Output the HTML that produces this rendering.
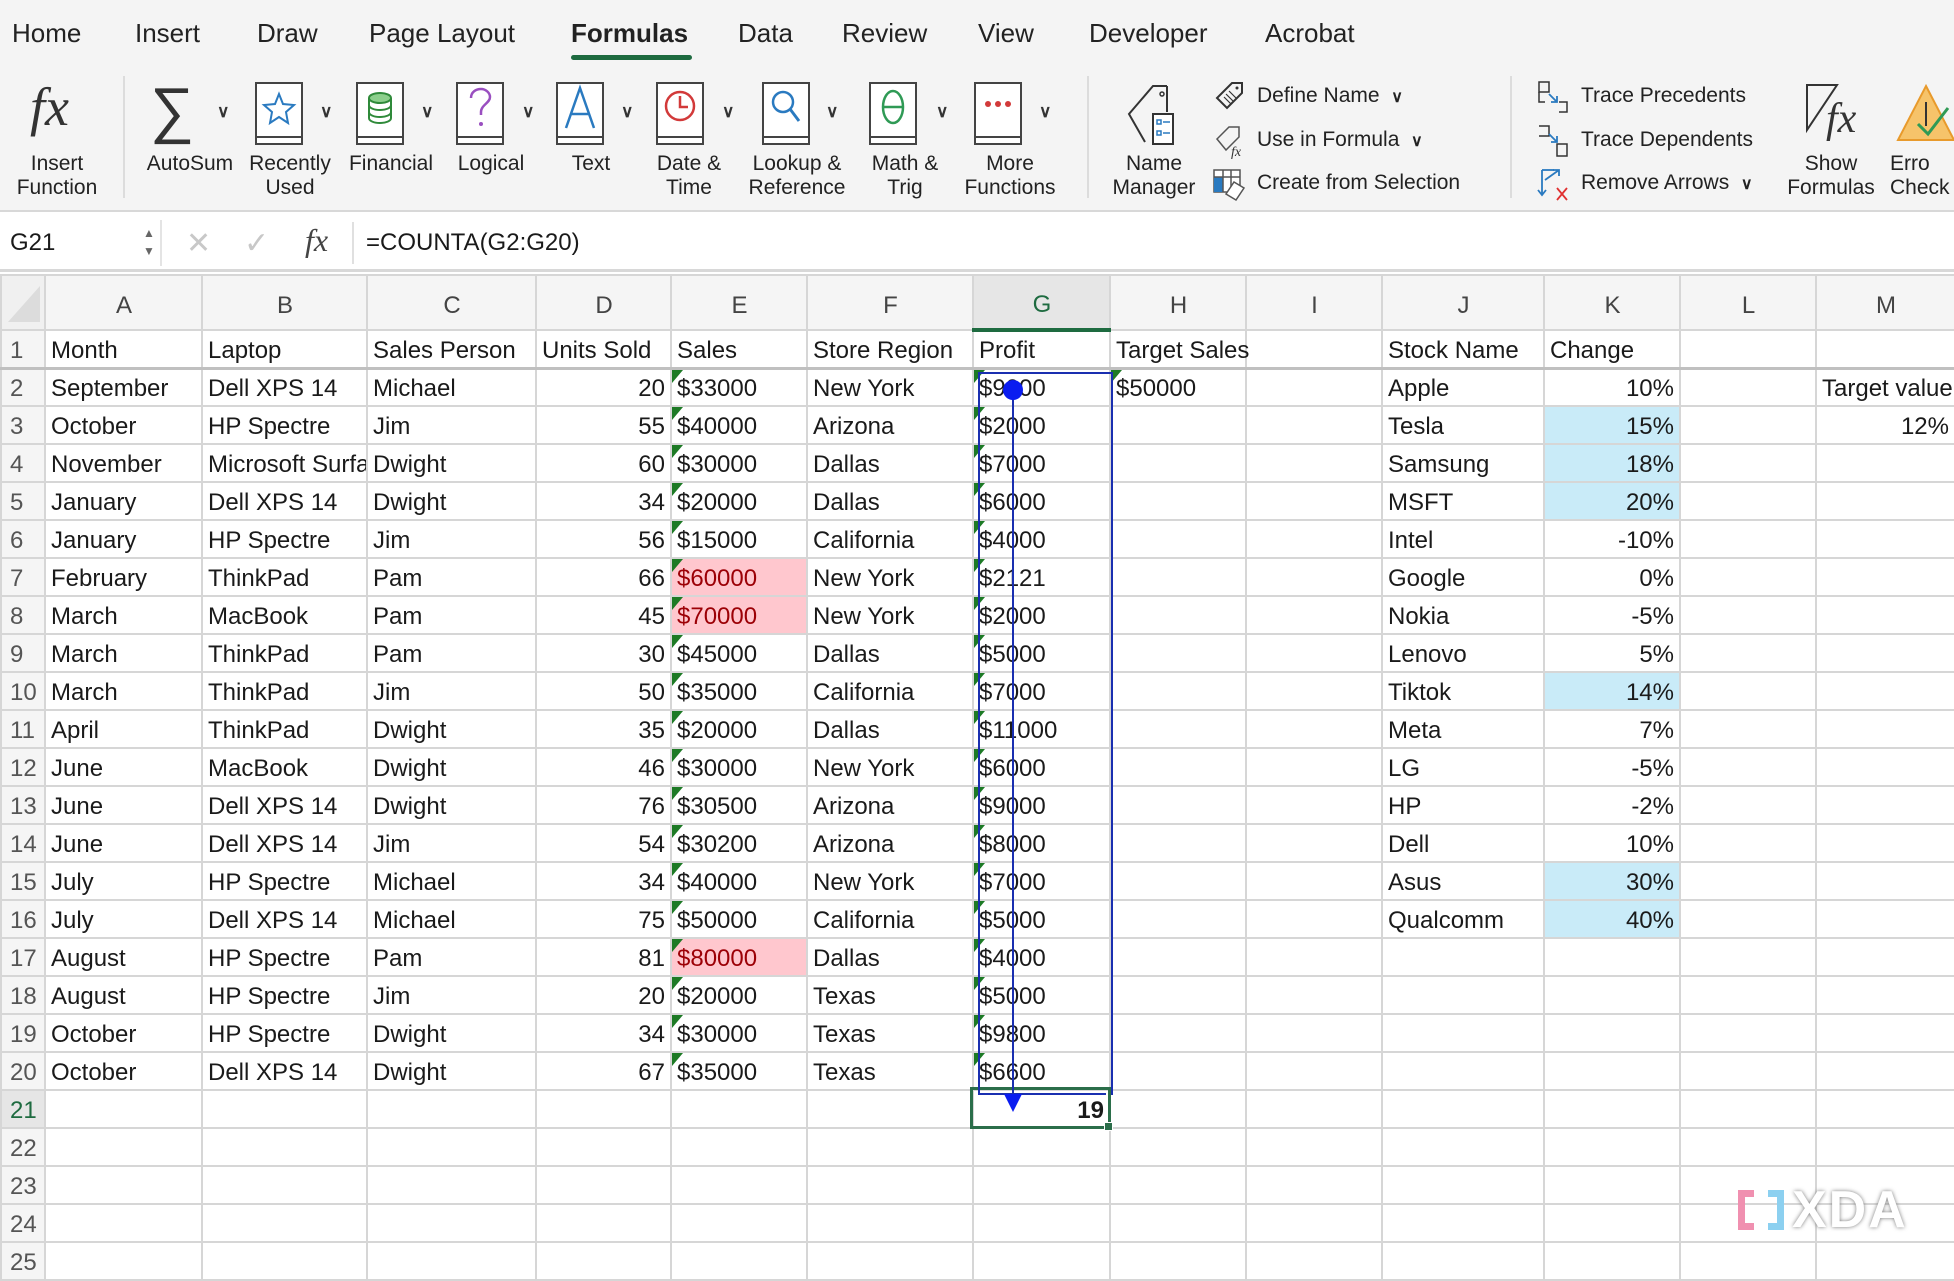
<!DOCTYPE html>
<html><head><meta charset="utf-8">
<style>
*{box-sizing:border-box;margin:0;padding:0}
body{width:1954px;height:1276px;overflow:hidden;background:#fff;font-family:"Liberation Sans",sans-serif;color:#1a1a1a;position:relative}
#ribbon{position:absolute;left:0;top:0;width:1954px;height:212px;background:#f4f4f4;border-bottom:2px solid #d8d8d8}
.tab{position:absolute;top:18px;font-size:26px;color:#222}
.lbl{position:absolute;font-size:21px;color:#222;text-align:center;line-height:24px;white-space:nowrap}
.sm{position:absolute;font-size:21px;color:#222;white-space:nowrap}
.sep{position:absolute;top:76px;width:2px;height:122px;background:#dcdcdc}
.chev{position:absolute;top:102px;font-size:17px;color:#333;font-weight:bold}
.cv{font-size:16px;font-weight:bold}
svg{position:absolute;overflow:visible}
#fbar{position:absolute;left:0;top:214px;width:1954px;height:58px;background:#fff;border-bottom:3px solid #d8d8d8}
table{position:absolute;left:0;top:274px;border-collapse:collapse;table-layout:fixed;width:1954px}
td{border:2px solid #d6d6d6;height:38px;font-size:24px;padding:4px 4px 0 5px;white-space:nowrap;overflow:hidden;position:relative;line-height:30px}
tr.h td{height:55px;background:#f5f5f5;text-align:center;color:#444;font-size:24px;padding-top:6px}
td.rn{background:#f5f5f5;color:#555;padding-left:8px}
.r{text-align:right;padding-right:5px}
.t::before{content:"";position:absolute;left:0;top:0;border-top:13px solid #1d7a25;border-right:11px solid transparent}
.p{background:#ffc7ce;color:#9c0006}
.b{background:#c9ebf8}
tr.one td{border-bottom:3px solid #c0c0c0}
</style></head><body>
<div id="ribbon">
<div class="tab" style="left:12px">Home</div>
<div class="tab" style="left:135px">Insert</div>
<div class="tab" style="left:257px">Draw</div>
<div class="tab" style="left:369px">Page Layout</div>
<div class="tab" style="left:571px;font-weight:bold">Formulas</div>
<div style="position:absolute;left:571px;top:55px;width:121px;height:5px;border-radius:3px;background:#1e6b40"></div>
<div class="tab" style="left:738px">Data</div>
<div class="tab" style="left:842px">Review</div>
<div class="tab" style="left:978px">View</div>
<div class="tab" style="left:1089px">Developer</div>
<div class="tab" style="left:1265px">Acrobat</div>

<div style="position:absolute;left:30px;top:76px;font-family:'Liberation Serif',serif;font-style:italic;font-size:54px;color:#333">fx</div>
<div class="lbl" style="left:7px;top:152px;width:100px">Insert<br>Function</div>
<div class="sep" style="left:123px"></div>

<div style="position:absolute;left:150px;top:76px;font-size:62px;color:#333;line-height:70px">∑</div>
<div class="lbl" style="left:140px;top:152px;width:100px">AutoSum</div>
<div class="chev" style="left:217px">∨</div>

<svg style="left:255px;top:82px" width="50" height="64"><rect x="1" y="1" width="46" height="54" fill="#fff" stroke="#444" stroke-width="2"/><rect x="1" y="55" width="46" height="7" fill="#fff" stroke="#444" stroke-width="2"/><polygon points="24,12 28,22 39,23 31,30 33,41 24,35 15,41 17,30 9,23 20,22" fill="none" stroke="#2a7ac0" stroke-width="2"/></svg>
<div class="lbl" style="left:240px;top:152px;width:100px">Recently<br>Used</div>
<div class="chev" style="left:320px">∨</div>

<svg style="left:356px;top:82px" width="50" height="64"><rect x="1" y="1" width="46" height="54" fill="#fff" stroke="#444" stroke-width="2"/><rect x="1" y="55" width="46" height="7" fill="#fff" stroke="#444" stroke-width="2"/><ellipse cx="24" cy="16" rx="11" ry="5" fill="#8ccf8c" stroke="#2f8a3a" stroke-width="2"/><path d="M13 16v20c0 3 5 5 11 5s11-2 11-5V16M13 23c0 3 5 5 11 5s11-2 11-5M13 30c0 3 5 5 11 5s11-2 11-5" fill="none" stroke="#2f8a3a" stroke-width="2"/></svg>
<div class="lbl" style="left:341px;top:152px;width:100px">Financial</div>
<div class="chev" style="left:421px">∨</div>

<svg style="left:456px;top:82px" width="50" height="64"><rect x="1" y="1" width="46" height="54" fill="#fff" stroke="#444" stroke-width="2"/><rect x="1" y="55" width="46" height="7" fill="#fff" stroke="#444" stroke-width="2"/><path d="M15 16c0-6 5-9 10-9s9 4 9 8c0 6-9 8-9 15v3" fill="none" stroke="#9a4fc0" stroke-width="2.5"/><circle cx="25" cy="42" r="2" fill="#9a4fc0"/></svg>
<div class="lbl" style="left:441px;top:152px;width:100px">Logical</div>
<div class="chev" style="left:522px">∨</div>

<svg style="left:556px;top:82px" width="50" height="64"><rect x="1" y="1" width="46" height="54" fill="#fff" stroke="#444" stroke-width="2"/><rect x="1" y="55" width="46" height="7" fill="#fff" stroke="#444" stroke-width="2"/><path d="M10 46L24 6L38 46M15 32h18" fill="none" stroke="#2a7ac0" stroke-width="2.5"/></svg>
<div class="lbl" style="left:541px;top:152px;width:100px">Text</div>
<div class="chev" style="left:621px">∨</div>

<svg style="left:656px;top:82px" width="50" height="64"><rect x="1" y="1" width="46" height="54" fill="#fff" stroke="#444" stroke-width="2"/><rect x="1" y="55" width="46" height="7" fill="#fff" stroke="#444" stroke-width="2"/><circle cx="24" cy="24" r="14" fill="none" stroke="#d23a3a" stroke-width="2.5"/><path d="M24 14v11h8" fill="none" stroke="#d23a3a" stroke-width="2.5"/></svg>
<div class="lbl" style="left:639px;top:152px;width:100px">Date &amp;<br>Time</div>
<div class="chev" style="left:722px">∨</div>

<svg style="left:762px;top:82px" width="50" height="64"><rect x="1" y="1" width="46" height="54" fill="#fff" stroke="#444" stroke-width="2"/><rect x="1" y="55" width="46" height="7" fill="#fff" stroke="#444" stroke-width="2"/><circle cx="21" cy="20" r="10" fill="none" stroke="#2a7ac0" stroke-width="2.5"/><path d="M28 27l9 12" stroke="#2a7ac0" stroke-width="3"/></svg>
<div class="lbl" style="left:742px;top:152px;width:110px">Lookup &amp;<br>Reference</div>
<div class="chev" style="left:826px">∨</div>

<svg style="left:869px;top:82px" width="50" height="64"><rect x="1" y="1" width="46" height="54" fill="#fff" stroke="#444" stroke-width="2"/><rect x="1" y="55" width="46" height="7" fill="#fff" stroke="#444" stroke-width="2"/><ellipse cx="24" cy="25" rx="10" ry="16" fill="none" stroke="#2f9a55" stroke-width="2.5"/><path d="M14 25h20" stroke="#2f9a55" stroke-width="2.5"/></svg>
<div class="lbl" style="left:855px;top:152px;width:100px">Math &amp;<br>Trig</div>
<div class="chev" style="left:936px">∨</div>

<svg style="left:974px;top:82px" width="50" height="64"><rect x="1" y="1" width="46" height="54" fill="#fff" stroke="#444" stroke-width="2"/><rect x="1" y="55" width="46" height="7" fill="#fff" stroke="#444" stroke-width="2"/><circle cx="14" cy="22" r="3" fill="#d23a3a"/><circle cx="24" cy="22" r="3" fill="#d23a3a"/><circle cx="34" cy="22" r="3" fill="#d23a3a"/></svg>
<div class="lbl" style="left:955px;top:152px;width:110px">More<br>Functions</div>
<div class="chev" style="left:1039px">∨</div>
<div class="sep" style="left:1087px"></div>

<svg style="left:1127px;top:84px" width="60" height="62"><path d="M40 2h-14L2 30l16 28" fill="none" stroke="#333" stroke-width="2"/><path d="M40 2v26" stroke="#333" stroke-width="2"/><circle cx="35" cy="10" r="2" fill="none" stroke="#333" stroke-width="1.5"/><rect x="26" y="30" width="20" height="30" fill="#fff" stroke="#333" stroke-width="2"/><rect x="30" y="36" width="4" height="4" fill="none" stroke="#2a7ac0" stroke-width="1.5"/><rect x="30" y="47" width="4" height="4" fill="none" stroke="#2a7ac0" stroke-width="1.5"/><path d="M36 38h7M36 49h7" stroke="#2a7ac0" stroke-width="1.5"/></svg>
<div class="lbl" style="left:1104px;top:152px;width:100px">Name<br>Manager</div>

<svg style="left:1214px;top:80px" width="32" height="32"><path d="M28 3H18L3 18l10 10 15-15z" fill="none" stroke="#333" stroke-width="2"/><path d="M12 14l8 8M10 17l7 7M15 11l7 7" stroke="#333" stroke-width="1.2"/><circle cx="23" cy="8" r="1.5" fill="#333"/></svg>
<div class="sm" style="left:1257px;top:84px">Define Name&nbsp;&nbsp;<span class="cv">∨</span></div>
<svg style="left:1214px;top:124px" width="32" height="36"><path d="M25 3v10L12 26 3 15 15 3z" fill="none" stroke="#555" stroke-width="1.5"/><text x="17" y="32" font-family="Liberation Serif" font-style="italic" font-size="14" fill="#333">fx</text></svg>
<div class="sm" style="left:1257px;top:128px">Use in Formula&nbsp;&nbsp;<span class="cv">∨</span></div>
<svg style="left:1212px;top:168px" width="34" height="34"><rect x="2" y="2" width="26" height="22" fill="#fff" stroke="#555" stroke-width="1.5"/><rect x="2" y="9" width="9" height="15" fill="#2a7ac0"/><path d="M2 9h26M11 2v22M19 2v22" stroke="#555" stroke-width="1.5"/><path d="M22 14l10 6-8 12-10-6z" fill="#fff" stroke="#555" stroke-width="1.5"/></svg>
<div class="sm" style="left:1257px;top:171px">Create from Selection</div>
<div class="sep" style="left:1510px"></div>

<svg style="left:1537px;top:80px" width="32" height="34"><rect x="2" y="2" width="10" height="10" fill="none" stroke="#333" stroke-width="1.5"/><path d="M2 12v10h6" fill="none" stroke="#333" stroke-width="1.5"/><path d="M12 14l8 8M20 16v6h-6" fill="none" stroke="#2a7ac0" stroke-width="1.8"/><path d="M22 22h8v10h-8" fill="none" stroke="#333" stroke-width="1.5"/></svg>
<div class="sm" style="left:1581px;top:84px">Trace Precedents</div>
<svg style="left:1537px;top:124px" width="32" height="34"><path d="M2 2h10v10H2" fill="none" stroke="#333" stroke-width="1.5"/><path d="M12 10l8 8M20 12v6h-6" fill="none" stroke="#2a7ac0" stroke-width="1.8"/><rect x="20" y="20" width="10" height="12" fill="none" stroke="#333" stroke-width="1.5"/></svg>
<div class="sm" style="left:1581px;top:128px">Trace Dependents</div>
<svg style="left:1537px;top:166px" width="34" height="36"><path d="M5 4v24M1 24l4 5 4-5M8 14L22 4M16 4h6v6" fill="none" stroke="#2a7ac0" stroke-width="1.8"/><path d="M5 4h12" stroke="#2a7ac0" stroke-width="1.8"/><path d="M20 22l10 12M30 22L20 34" stroke="#e03030" stroke-width="1.8"/></svg>
<div class="sm" style="left:1581px;top:171px">Remove Arrows&nbsp;&nbsp;<span class="cv">∨</span></div>

<svg style="left:1804px;top:82px" width="56" height="64"><path d="M3 3h30L3 48z" fill="none" stroke="#333" stroke-width="2"/><text x="22" y="50" font-family="Liberation Serif" font-style="italic" font-size="42" fill="#333">fx</text></svg>
<div class="lbl" style="left:1781px;top:152px;width:100px">Show<br>Formulas</div>
<svg style="left:1896px;top:84px" width="60" height="60"><path d="M30 2L58 56H2z" fill="#f6c36a" stroke="#e89a2c" stroke-width="2"/><path d="M30 18v24" stroke="#333" stroke-width="2"/><path d="M22 40l10 10 20-26" fill="none" stroke="#2f9a55" stroke-width="3"/></svg>
<div class="lbl" style="left:1890px;top:152px;width:100px;text-align:left">Erro<br>Check</div>
</div>

<div id="fbar">
<div style="position:absolute;left:0;top:6px;width:162px;height:46px;border-right:2px solid #e4e4e4;font-size:24px;padding:9px 0 0 10px">G21</div>
<div style="position:absolute;left:143px;top:10px;font-size:12px;color:#666;line-height:18px">▲<br>▼</div>
<div style="position:absolute;left:186px;top:12px;font-size:30px;color:#c8c8c8">✕</div>
<div style="position:absolute;left:244px;top:12px;font-size:30px;color:#c8c8c8">✓</div>
<div style="position:absolute;left:305px;top:8px;font-family:'Liberation Serif',serif;font-style:italic;font-size:32px;color:#444">fx</div>
<div style="position:absolute;left:352px;top:8px;width:2px;height:42px;background:#e0e0e0"></div>
<div style="position:absolute;left:366px;top:15px;font-size:24px">=COUNTA(G2:G20)</div>
</div>

<table>
<colgroup><col style="width:44px"><col style="width:157px"><col style="width:165px"><col style="width:169px"><col style="width:135px"><col style="width:136px"><col style="width:166px"><col style="width:137px"><col style="width:136px"><col style="width:136px"><col style="width:162px"><col style="width:136px"><col style="width:136px"><col style="width:139px"></colgroup>
<tr class="h"><td style="background:#f0f0f0"><svg style="left:4px;top:8px" width="36" height="40"><path d="M34 2V38H2z" fill="#dcdcdc"/></svg></td><td>A</td><td>B</td><td>C</td><td>D</td><td>E</td><td>F</td><td style="background:#e6e6e6;color:#1e6b40;border-bottom:4px solid #1e6b40">G</td><td>H</td><td>I</td><td>J</td><td>K</td><td>L</td><td>M</td></tr>
<tr class="one"><td class="rn">1</td><td>Month</td><td>Laptop</td><td>Sales Person</td><td>Units Sold</td><td>Sales</td><td>Store Region</td><td>Profit</td><td style="overflow:visible;z-index:2">Target Sales</td><td></td><td>Stock Name</td><td>Change</td><td></td><td></td></tr>
<tr><td class="rn">2</td><td>September</td><td>Dell XPS 14</td><td>Michael</td><td class="r">20</td><td class="t">$33000</td><td>New York</td><td class="t">$9000</td><td class="t">$50000</td><td></td><td>Apple</td><td class="r">10%</td><td></td><td style="overflow:visible">Target value</td></tr>
<tr><td class="rn">3</td><td>October</td><td>HP Spectre</td><td>Jim</td><td class="r">55</td><td class="t">$40000</td><td>Arizona</td><td class="t">$2000</td><td></td><td></td><td>Tesla</td><td class="r b">15%</td><td></td><td class="r">12%</td></tr>
<tr><td class="rn">4</td><td>November</td><td>Microsoft Surface</td><td>Dwight</td><td class="r">60</td><td class="t">$30000</td><td>Dallas</td><td class="t">$7000</td><td></td><td></td><td>Samsung</td><td class="r b">18%</td><td></td><td></td></tr>
<tr><td class="rn">5</td><td>January</td><td>Dell XPS 14</td><td>Dwight</td><td class="r">34</td><td class="t">$20000</td><td>Dallas</td><td class="t">$6000</td><td></td><td></td><td>MSFT</td><td class="r b">20%</td><td></td><td></td></tr>
<tr><td class="rn">6</td><td>January</td><td>HP Spectre</td><td>Jim</td><td class="r">56</td><td class="t">$15000</td><td>California</td><td class="t">$4000</td><td></td><td></td><td>Intel</td><td class="r">-10%</td><td></td><td></td></tr>
<tr><td class="rn">7</td><td>February</td><td>ThinkPad</td><td>Pam</td><td class="r">66</td><td class="t p">$60000</td><td>New York</td><td class="t">$2121</td><td></td><td></td><td>Google</td><td class="r">0%</td><td></td><td></td></tr>
<tr><td class="rn">8</td><td>March</td><td>MacBook</td><td>Pam</td><td class="r">45</td><td class="t p">$70000</td><td>New York</td><td class="t">$2000</td><td></td><td></td><td>Nokia</td><td class="r">-5%</td><td></td><td></td></tr>
<tr><td class="rn">9</td><td>March</td><td>ThinkPad</td><td>Pam</td><td class="r">30</td><td class="t">$45000</td><td>Dallas</td><td class="t">$5000</td><td></td><td></td><td>Lenovo</td><td class="r">5%</td><td></td><td></td></tr>
<tr><td class="rn">10</td><td>March</td><td>ThinkPad</td><td>Jim</td><td class="r">50</td><td class="t">$35000</td><td>California</td><td class="t">$7000</td><td></td><td></td><td>Tiktok</td><td class="r b">14%</td><td></td><td></td></tr>
<tr><td class="rn">11</td><td>April</td><td>ThinkPad</td><td>Dwight</td><td class="r">35</td><td class="t">$20000</td><td>Dallas</td><td class="t">$11000</td><td></td><td></td><td>Meta</td><td class="r">7%</td><td></td><td></td></tr>
<tr><td class="rn">12</td><td>June</td><td>MacBook</td><td>Dwight</td><td class="r">46</td><td class="t">$30000</td><td>New York</td><td class="t">$6000</td><td></td><td></td><td>LG</td><td class="r">-5%</td><td></td><td></td></tr>
<tr><td class="rn">13</td><td>June</td><td>Dell XPS 14</td><td>Dwight</td><td class="r">76</td><td class="t">$30500</td><td>Arizona</td><td class="t">$9000</td><td></td><td></td><td>HP</td><td class="r">-2%</td><td></td><td></td></tr>
<tr><td class="rn">14</td><td>June</td><td>Dell XPS 14</td><td>Jim</td><td class="r">54</td><td class="t">$30200</td><td>Arizona</td><td class="t">$8000</td><td></td><td></td><td>Dell</td><td class="r">10%</td><td></td><td></td></tr>
<tr><td class="rn">15</td><td>July</td><td>HP Spectre</td><td>Michael</td><td class="r">34</td><td class="t">$40000</td><td>New York</td><td class="t">$7000</td><td></td><td></td><td>Asus</td><td class="r b">30%</td><td></td><td></td></tr>
<tr><td class="rn">16</td><td>July</td><td>Dell XPS 14</td><td>Michael</td><td class="r">75</td><td class="t">$50000</td><td>California</td><td class="t">$5000</td><td></td><td></td><td>Qualcomm</td><td class="r b">40%</td><td></td><td></td></tr>
<tr><td class="rn">17</td><td>August</td><td>HP Spectre</td><td>Pam</td><td class="r">81</td><td class="t p">$80000</td><td>Dallas</td><td class="t">$4000</td><td></td><td></td><td></td><td></td><td></td><td></td></tr>
<tr><td class="rn">18</td><td>August</td><td>HP Spectre</td><td>Jim</td><td class="r">20</td><td class="t">$20000</td><td>Texas</td><td class="t">$5000</td><td></td><td></td><td></td><td></td><td></td><td></td></tr>
<tr><td class="rn">19</td><td>October</td><td>HP Spectre</td><td>Dwight</td><td class="r">34</td><td class="t">$30000</td><td>Texas</td><td class="t">$9800</td><td></td><td></td><td></td><td></td><td></td><td></td></tr>
<tr><td class="rn">20</td><td>October</td><td>Dell XPS 14</td><td>Dwight</td><td class="r">67</td><td class="t">$35000</td><td>Texas</td><td class="t">$6600</td><td></td><td></td><td></td><td></td><td></td><td></td></tr>
<tr><td class="rn" style="color:#1e6b40;background:#e6e6e6">21</td><td></td><td></td><td></td><td></td><td></td><td></td><td class="r" style="font-weight:bold">19</td><td></td><td></td><td></td><td></td><td></td><td></td></tr>
<tr><td class="rn">22</td><td></td><td></td><td></td><td></td><td></td><td></td><td></td><td></td><td></td><td></td><td></td><td></td><td></td></tr>
<tr><td class="rn">23</td><td></td><td></td><td></td><td></td><td></td><td></td><td></td><td></td><td></td><td></td><td></td><td></td><td></td></tr>
<tr><td class="rn">24</td><td></td><td></td><td></td><td></td><td></td><td></td><td></td><td></td><td></td><td></td><td></td><td></td><td></td></tr>
<tr><td class="rn">25</td><td></td><td></td><td></td><td></td><td></td><td></td><td></td><td></td><td></td><td></td><td></td><td></td><td></td></tr>
</table>

<div style="position:absolute;left:970px;top:1087px;width:141px;height:42px;border:3px solid #2b6e4a"></div>
<div style="position:absolute;left:1104px;top:1122px;width:9px;height:9px;background:#2b6e4a;border:1px solid #fff"></div>
<div style="position:absolute;left:978px;top:372px;width:135px;height:723px;border:2px solid #1a2fb0;border-bottom:none"></div>
<div style="position:absolute;left:978px;top:1093px;width:128px;height:2px;background:#1a2fb0"></div>
<div style="position:absolute;left:1012px;top:389px;width:2px;height:704px;background:#1a2fb0"></div>
<div style="position:absolute;left:1003px;top:380px;width:20px;height:20px;border-radius:50%;background:#0a1cf0"></div>
<svg style="left:1004px;top:1094px" width="18" height="20"><path d="M0 0h18L9 18z" fill="#0a1cf0"/></svg>

<div style="position:absolute;left:1738px;top:1190px;width:16px;height:40px;border:7px solid #f090b0;border-right:none"></div>
<div style="position:absolute;left:1768px;top:1190px;width:16px;height:40px;border:7px solid #8cd0f0;border-left:none"></div>
<div style="position:absolute;left:1792px;top:1180px;font-size:52px;font-weight:bold;color:#fff;text-shadow:0 0 4px #777;letter-spacing:2px">XDA</div>
</body></html>
